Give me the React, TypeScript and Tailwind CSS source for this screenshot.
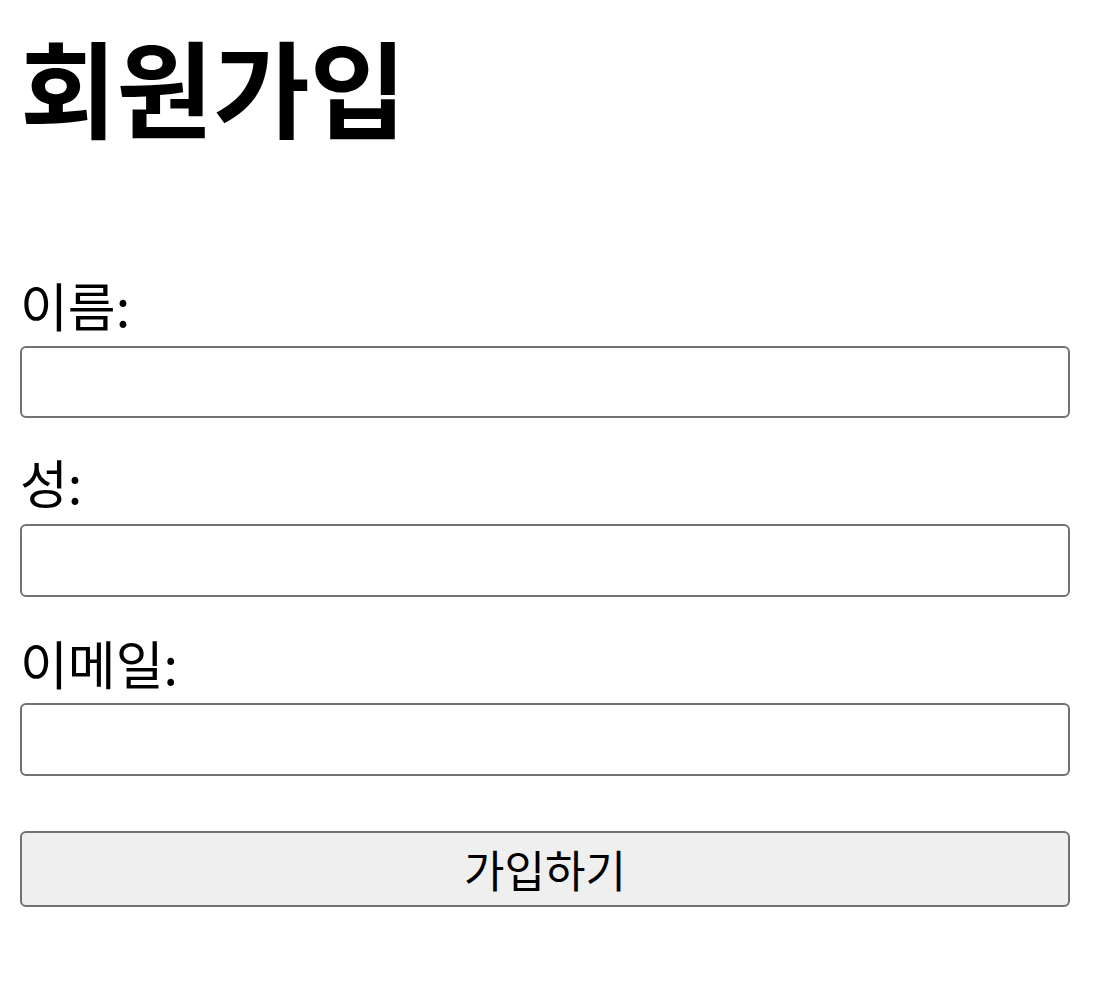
export default function App() {
  const font = { fontFamily: '"Noto Sans CJK KR", "Noto Sans", sans-serif' };
  return (
    <div className="min-h-screen bg-white text-black" style={font}>
      <div className="px-[20px] w-[1090px]">
        <h1 className="pt-[24px] h-[150px] text-[105px] leading-[120px] font-bold">회원가입</h1>
        <form className="flex flex-col mt-[130px] w-[1050px]">
          <label className="h-[56px] text-[52px] leading-[50px]">이름:</label>
          <input type="text" className="mt-[10px] h-[72px] border-2 border-[#727272] rounded-[6px] bg-white" />
          <label className="mt-[39px] h-[56px] text-[52px] leading-[50px]">성:</label>
          <input type="text" className="mt-[11px] h-[73px] border-2 border-[#727272] rounded-[6px] bg-white" />
          <label className="mt-[41px] h-[56px] text-[52px] leading-[50px]">이메일:</label>
          <input type="email" className="mt-[9px] h-[73px] border-2 border-[#727272] rounded-[6px] bg-white" />
          <button type="submit" className="mt-[55px] h-[76px] border-2 border-[#727272] rounded-[6px] bg-[#efefef] text-[44px] leading-[70px]">
            가입하기
          </button>
        </form>
      </div>
    </div>
  );
}
